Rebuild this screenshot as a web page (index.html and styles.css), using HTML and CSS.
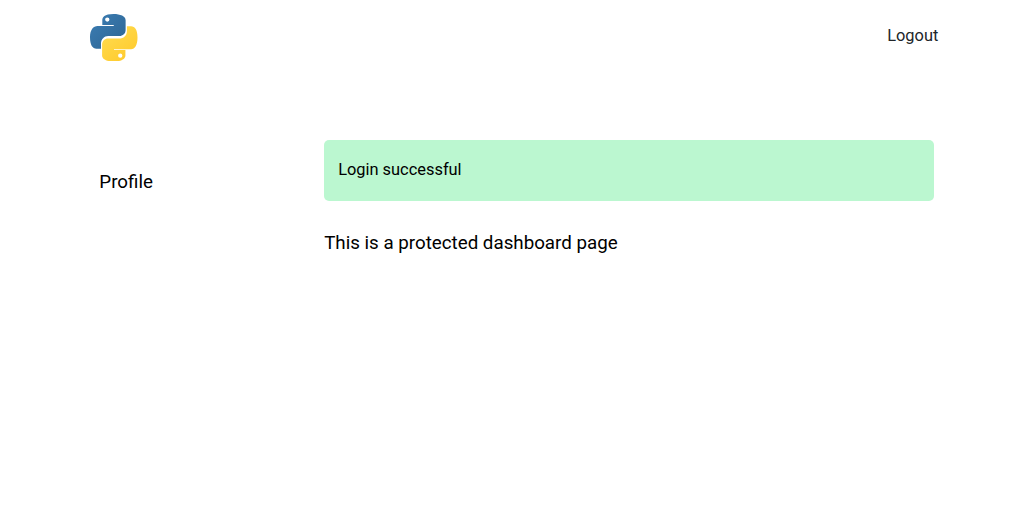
FILE: index.html
```html
<!DOCTYPE html>
<html lang="en">
<head>
<meta charset="utf-8">
<title>Dashboard</title>
<link rel="stylesheet" href="styles.css">
</head>
<body>
<header class="navbar">
  <a class="logo" aria-label="Home">
    <svg viewBox="0 0 110 110" width="47.5" height="47.5">
      <defs>
        <linearGradient id="blue" x1="0" y1="0" x2="0.8" y2="0.8"><stop offset="0" stop-color="#3c7eb5"/><stop offset="1" stop-color="#306998"/></linearGradient>
        <linearGradient id="yellow" x1="0.2" y1="0.2" x2="0.8" y2="1"><stop offset="0" stop-color="#ffd94a"/><stop offset="1" stop-color="#ffca2c"/></linearGradient>
      </defs>
      <path fill="url(#blue)" d="M54.600 0C33 0 28.500 8 28.500 14.500V25.500H55v2H17.500C8 27.500 0 36 0 54s6 26.500 15 26.500h10.500V68c0-9 7.500-17 16.500-17h26c8 0 14.500-6 14.500-14V14.500C82.500 5 70 0 54.600 0ZM40 8a5 5 0 1 1 0 10 5 5 0 0 1 0-10Z"/>
      <path fill="url(#yellow)" d="M85.500 28.500V40c0 10-8 17-17.500 17H42c-8 0-14 6-14 14v25c0 8 10.500 14 27 14 17 0 27-6 27-14V83.500H55.500v-2H95c9 0 15-9 15-27s-6-26-15-26ZM70 91.500a5 5 0 1 1 0 10 5 5 0 0 1 0-10Z"/>
    </svg>
  </a>
  <a class="logout">Logout</a>
</header>
<div class="layout">
  <nav class="sidebar"><a class="profile">Profile</a></nav>
  <main class="content">
    <div class="alert">Login successful</div>
    <p class="message">This is a protected dashboard page</p>
  </main>
</div>
</body>
</html>
```
FILE: styles.css
```css
* { box-sizing: border-box; }
body { margin: 0; background: #fff; color: #000; font: 16.4px/24px Roboto, sans-serif; }
.navbar { display: flex; justify-content: space-between; align-items: flex-start; height: 140px; padding: 13.75px 94.7px 0 90px; }
.logo svg { display: block; }
.logout { margin-top: 10.25px; color: #212529; }
.layout { display: flex; padding: 0 99.3px; }
.sidebar { width: 225px; padding-top: 28px; font-size: 18.75px; line-height: 28px; }
.content { width: 610px; }
.alert { height: 61px; padding: 18px 14px; border-radius: 5px; background: #bbf7d0; }
.message { margin: 28px 0 0; font-size: 18.75px; line-height: 28px; }
```
